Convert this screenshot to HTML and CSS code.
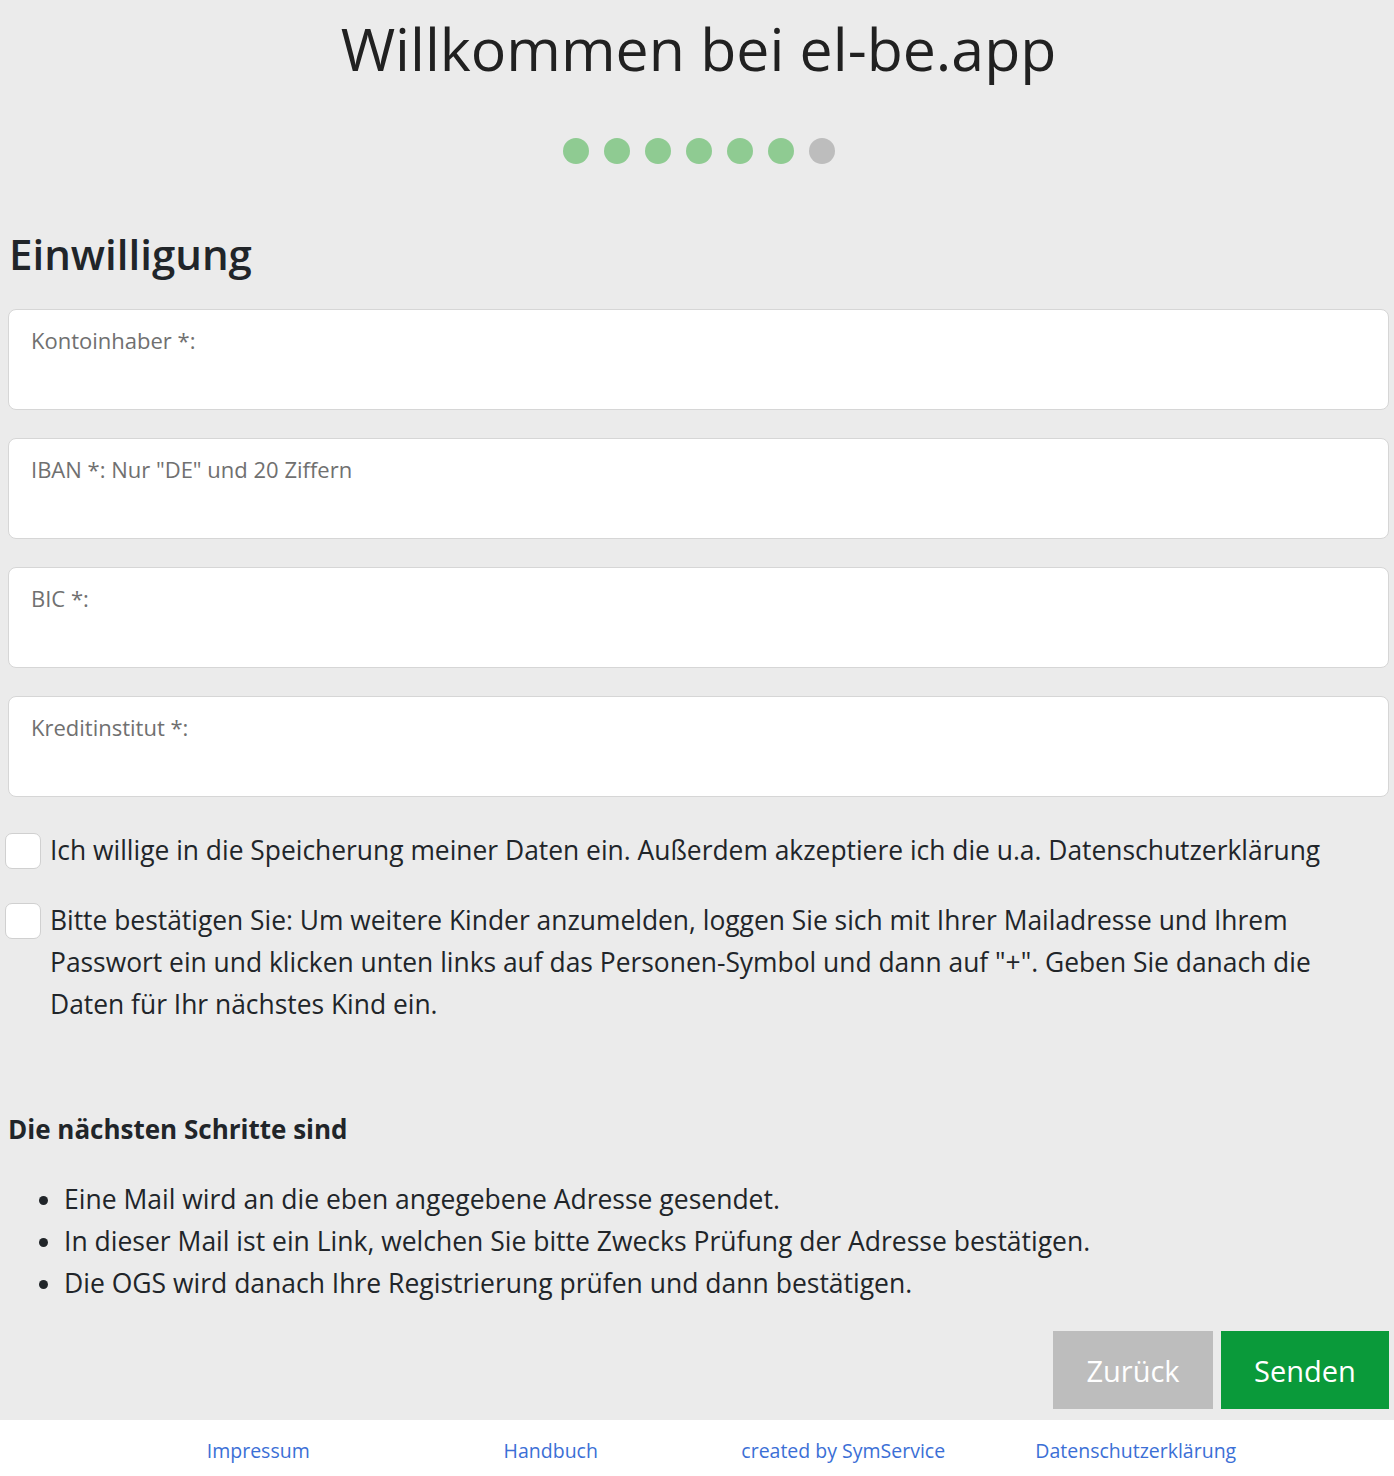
FILE: index.html
```html
<!DOCTYPE html>
<html lang="de">
<head>
<meta charset="utf-8">
<title>el-be.app</title>
<link rel="stylesheet" href="styles.css">
</head>
<body>
<main class="page">
  <h1 class="title">Willkommen bei el-be.app</h1>
  <div class="steps">
    <span class="dot done"></span><span class="dot done"></span><span class="dot done"></span><span class="dot done"></span><span class="dot done"></span><span class="dot done"></span><span class="dot"></span>
  </div>
  <h2 class="section">Einwilligung</h2>
  <form class="form">
    <label class="field"><span class="field-label">Kontoinhaber *:</span><input class="field-input" type="text"></label>
    <label class="field"><span class="field-label">IBAN *: Nur "DE" und 20 Ziffern</span><input class="field-input" type="text"></label>
    <label class="field"><span class="field-label">BIC *:</span><input class="field-input" type="text"></label>
    <label class="field"><span class="field-label">Kreditinstitut *:</span><input class="field-input" type="text"></label>

    <div class="checks">
      <label class="check"><span class="box"></span><span class="check-text">Ich willige in die Speicherung meiner Daten ein. Außerdem akzeptiere ich die u.a. Datenschutzerklärung</span></label>
      <label class="check"><span class="box"></span><span class="check-text">Bitte bestätigen Sie: Um weitere Kinder anzumelden, loggen Sie sich mit Ihrer Mailadresse und Ihrem Passwort ein und klicken unten links auf das Personen-Symbol und dann auf "+". Geben Sie danach die Daten für Ihr nächstes Kind ein.</span></label>
    </div>
  </form>

  <h3 class="next">Die nächsten Schritte sind</h3>
  <ul class="list">
    <li>Eine Mail wird an die eben angegebene Adresse gesendet.</li>
    <li>In dieser Mail ist ein Link, welchen Sie bitte Zwecks Prüfung der Adresse bestätigen.</li>
    <li>Die OGS wird danach Ihre Registrierung prüfen und dann bestätigen.</li>
  </ul>

  <div class="actions">
    <button class="btn btn-back" type="button">Zurück</button>
    <button class="btn btn-send" type="button">Senden</button>
  </div>
</main>
<footer class="footer">
  <nav class="footer-inner">
    <a href="#">Impressum</a>
    <a href="#">Handbuch</a>
    <a href="#">created by SymService</a>
    <a href="#">Datenschutzerklärung</a>
  </nav>
</footer>
</body>
</html>
```

FILE: styles.css
```css
html, body {
  margin: 0;
  padding: 0;
  background: #ebebeb;
}
body {
  font-family: "Segoe UI", "Open Sans", "Noto Sans", sans-serif;
  color: #212529;
}
.page {
  padding: 0 5px 0 8px;
}
.title {
  margin: 0;
  padding-top: 10px;
  text-align: center;
  font-size: 59px;
  font-weight: 400;
  line-height: 76px;
  color: #212121;
}
.steps {
  display: flex;
  justify-content: center;
  gap: 15px;
  margin-top: 52px;
}
.dot {
  width: 26px;
  height: 26px;
  border-radius: 50%;
  background: #bdbdbd;
}
.dot.done {
  background: #8fcb92;
}
.section {
  margin: 60px 0 0 1px;
  font-size: 42px;
  font-weight: 600;
  line-height: 60px;
}
.form {
  margin-top: 25px;
  display: flex;
  flex-direction: column;
}
.field {
  display: flex;
  flex-direction: column;
  height: 101px;
  box-sizing: border-box;
  background: #fff;
  border: 1px solid #d6d6d6;
  border-radius: 8px;
  padding: 12px 22px 0;
  margin-bottom: 28px;
}
.field-label {
  font-size: 22px;
  line-height: 36px;
  color: #707070;
}
.field-input {
  border: 0;
  outline: 0;
  background: transparent;
  font: inherit;
  font-size: 22px;
  padding: 0;
}
.checks {
  margin-top: 4px;
}
.check {
  display: flex;
  align-items: flex-start;
  gap: 9px;
  margin-left: -3px;
  margin-bottom: 28px;
}
.box {
  flex: none;
  width: 34px;
  height: 34px;
  margin-top: 4px;
  background: #fff;
  border: 1px solid #d0d0d0;
  border-radius: 7px;
}
.check-text {
  font-size: 26.4px;
  line-height: 42px;
  color: #212529;
}
.next {
  margin: 58px 0 0;
  font-size: 26px;
  font-weight: 700;
  line-height: 36px;
}
.list {
  margin: 31px 0 0;
  padding-left: 56px;
  font-size: 26.5px;
  line-height: 42px;
}
.actions {
  display: flex;
  justify-content: flex-end;
  gap: 8px;
  margin-top: 27px;
  padding-bottom: 11px;
}
.btn {
  height: 78px;
  border: 0;
  font-family: inherit;
  font-size: 29px;
  color: #fff;
  padding: 0;
}
.btn-back {
  width: 160px;
  background: #bdbdbd;
}
.btn-send {
  width: 168px;
  background: #0a9a3a;
}
.footer {
  background: #fff;
  height: 56px;
}
.footer-inner {
  width: 1170px;
  margin: 0 auto;
  display: grid;
  grid-template-columns: repeat(4, 1fr);
  padding-top: 18px;
}
.footer-inner a {
  text-align: center;
  color: #3b6fd6;
  text-decoration: none;
  font-size: 19.5px;
  line-height: 26px;
}
```
